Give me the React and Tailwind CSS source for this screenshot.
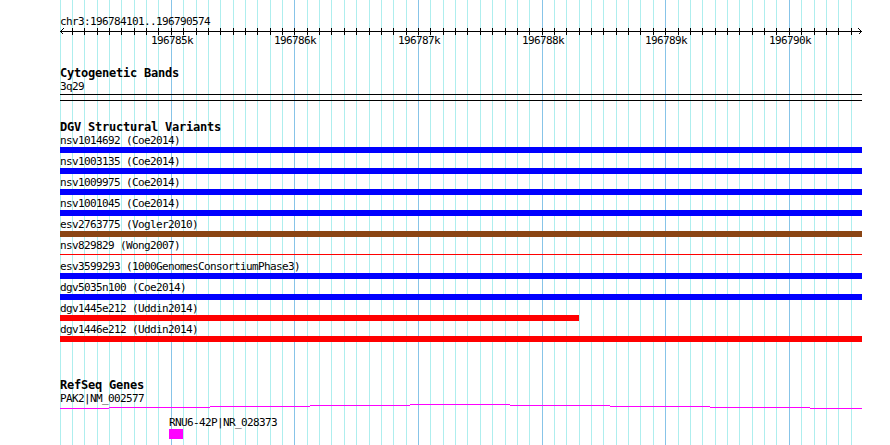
import React from 'react';

const START = 196784101;
const END = 196790574;
const SCALE = 0.1236;
const ORIGIN = 60.2;

const toX = (bp) => Math.floor(ORIGIN + (bp - START) * SCALE);

const gridBps = [];
for (let bp = 196784100; bp <= END; bp += 100) gridBps.push(bp);

const variants = [
  { name: 'nsv1014692 (Coe2014)', color: 'bg-[#0000ff]', kind: 'bar' },
  { name: 'nsv1003135 (Coe2014)', color: 'bg-[#0000ff]', kind: 'bar' },
  { name: 'nsv1009975 (Coe2014)', color: 'bg-[#0000ff]', kind: 'bar' },
  { name: 'nsv1001045 (Coe2014)', color: 'bg-[#0000ff]', kind: 'bar' },
  { name: 'esv2763775 (Vogler2010)', color: 'bg-[#8b4513]', kind: 'bar' },
  { name: 'nsv829829 (Wong2007)', color: 'bg-[#ff0000]', kind: 'line' },
  { name: 'esv3599293 (1000GenomesConsortiumPhase3)', color: 'bg-[#0000ff]', kind: 'bar' },
  { name: 'dgv5035n100 (Coe2014)', color: 'bg-[#0000ff]', kind: 'bar' },
  { name: 'dgv1445e212 (Uddin2014)', color: 'bg-[#ff0000]', kind: 'short' },
  { name: 'dgv1446e212 (Uddin2014)', color: 'bg-[#ff0000]', kind: 'bar' },
];

function Grid() {
  return (
    <svg className="absolute inset-0" width="890" height="445" shapeRendering="crispEdges">
      {gridBps.map((bp) => (
        <rect
          key={bp}
          x={toX(bp)}
          y="0"
          width="1"
          height="445"
          fill={bp % 1000 === 0 ? '#87c4e8' : '#aeeeee'}
        />
      ))}
    </svg>
  );
}

function Ruler() {
  const majors = gridBps.filter((bp) => bp % 1000 === 0);
  return (
    <div className="flex flex-col pt-[15px]">
      <div>chr3:196784101..196790574</div>
      <svg width="802" height="7" shapeRendering="crispEdges" className="block">
        <rect x="0" y="3" width="802" height="1" fill="#000" />
        {gridBps.slice(1).map((bp) => (
          <rect key={bp} x={toX(bp) - 60} y="0" width="1" height="7" fill="#000" />
        ))}
        <path d="M0.5 3.5 L3.5 0.5 M0.5 3.5 L3.5 6.5" stroke="#000" fill="none" />
        <path d="M801.5 3.5 L798.5 0.5 M801.5 3.5 L798.5 6.5" stroke="#000" fill="none" />
      </svg>
      <div className="relative h-[13px] -mt-[1px]">
        {majors.map((bp) => (
          <span
            key={bp}
            className="absolute top-0 -translate-x-1/2"
            style={{ left: toX(bp) - 60 + 1 }}
          >
            {bp / 1000}k
          </span>
        ))}
      </div>
    </div>
  );
}

function Title({ children, className = '' }) {
  return (
    <div className={`font-bold text-[12px] tracking-[-0.22px] ${className}`}>{children}</div>
  );
}

function VariantRow({ v }) {
  return (
    <div className="flex flex-col mb-[2px]">
      <div>{v.name}</div>
      {v.kind === 'bar' && <div className={`h-[6px] w-[802px] ${v.color}`} />}
      {v.kind === 'short' && <div className={`h-[6px] w-[519px] ${v.color}`} />}
      {v.kind === 'line' && (
        <div className="h-[6px] pt-[2px]">
          <div className={`h-[1px] w-[802px] ${v.color}`} />
        </div>
      )}
    </div>
  );
}

function GeneLine() {
  const segs = [
    [0, 49, 5],
    [49, 150, 4],
    [150, 250, 3],
    [250, 350, 2],
    [350, 450, 1],
    [450, 550, 2],
    [550, 650, 3],
    [650, 750, 4],
    [750, 802, 5],
  ];
  return (
    <svg width="802" height="7" shapeRendering="crispEdges" className="block -mt-[2px]">
      {segs.map(([a, b, y]) => (
        <rect key={a} x={a} y={y} width={b - a} height="1" fill="#ff00ff" />
      ))}
    </svg>
  );
}

export default function App() {
  return (
    <div className="relative w-[890px] h-[445px] overflow-hidden bg-white text-black font-['DejaVu_Sans_Mono',monospace] text-[11px] leading-[13px] tracking-[-0.62px]">
      <Grid />
      <div className="relative flex flex-col pl-[60px] w-[862px]">
        <Ruler />

        <Title className="mt-[20px]">Cytogenetic Bands</Title>
        <div>3q29</div>
        <div className="mt-[1px] h-[7px] w-[802px] border-y border-black" />

        <Title className="mt-[20px]">DGV Structural Variants</Title>
        {variants.map((v) => (
          <VariantRow key={v.name} v={v} />
        ))}

        <Title className="mt-[35px]">RefSeq Genes</Title>
        <div>PAK2|NM_002577</div>
        <GeneLine />
        <div className="mt-[6px] ml-[109px]">RNU6-42P|NR_028373</div>
        <div className="ml-[109px] h-[10px] w-[14px] bg-[#ff00ff]" />
      </div>
    </div>
  );
}
